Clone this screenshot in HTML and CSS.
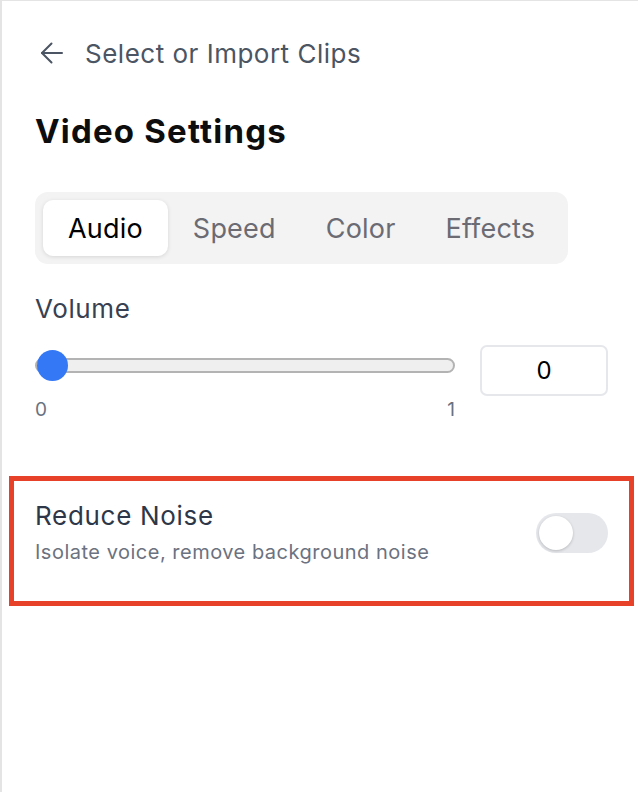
FILE: index.html
```html
<!DOCTYPE html>
<html lang="en">
<head>
    <meta charset="UTF-8">
    <meta name="viewport" content="width=device-width, initial-scale=1.0">
    <title>Video Settings</title>
    <link rel="stylesheet" href="styles.css">
</head>
<body>
    <div class="panel">
        <div class="back-row">
            <svg class="back-icon" viewBox="0 0 24 24" width="24" height="24" fill="none" stroke="currentColor" stroke-width="2" stroke-linecap="round" stroke-linejoin="round">
                <path d="M22 12H2"/>
                <path d="M11.5 2.5L2 12l9.5 9.5"/>
            </svg>
            <span>Select or Import Clips</span>
        </div>

        <h1 class="title">Video Settings</h1>

        <div class="tabs">
            <button class="tab active">Audio</button>
            <button class="tab">Speed</button>
            <button class="tab">Color</button>
            <button class="tab">Effects</button>
        </div>

        <div class="field">
            <div class="field-label">Volume</div>
            <div class="slider-row">
                <div class="slider-col">
                    <input class="slider" type="range" min="0" max="1" step="0.01" value="0">
                    <div class="slider-marks">
                        <span>0</span>
                        <span>1</span>
                    </div>
                </div>
                <input class="value-box" type="text" value="0">
            </div>
        </div>

        <div class="option highlight">
            <div class="option-text">
                <div class="option-title">Reduce Noise</div>
                <div class="option-desc">Isolate voice, remove background noise</div>
            </div>
            <div class="toggle"><div class="knob"></div></div>
        </div>
    </div>
</body>
</html>
```

FILE: styles.css
```css
html, body {
    margin: 0;
    background-color: #ffffff;
}
body {
    font-family: Inter, "Noto Sans", sans-serif;
}
.panel {
    min-height: 100vh;
    box-sizing: border-box;
    border-left: 2px solid #e4e4e4;
    border-top: 1px solid #e4e4e4;
    padding: 36px 30px 0 33px;
}
.back-row {
    display: flex;
    align-items: center;
    gap: 21px;
    height: 32px;
    color: #4b5563;
    font-size: 26px;
    letter-spacing: 0.5px;
    margin-left: 5px;
}
.back-icon {
    display: block;
}
.title {
    margin: 42px 0 0;
    font-size: 33px;
    line-height: 40px;
    font-weight: 700;
    letter-spacing: 1.2px;
    color: #0d0d0d;
}
.tabs {
    display: inline-flex;
    margin-top: 41px;
    padding: 8px;
    background-color: #f3f3f3;
    border-radius: 13px;
}
.tab {
    font-family: inherit;
    font-size: 27px;
    letter-spacing: 0.2px;
    height: 56px;
    padding: 0 25px;
    border: none;
    background: none;
    color: #6b6b73;
    border-radius: 10px;
    cursor: pointer;
}
.tab.active {
    background-color: #ffffff;
    color: #000000;
    box-shadow: 0 1px 4px rgba(0, 0, 0, 0.12);
}
.field {
    margin-top: 30px;
}
.field-label {
    font-size: 26px;
    line-height: 30px;
    letter-spacing: 0.6px;
    color: #374151;
}
.slider-row {
    display: flex;
    align-items: flex-start;
    gap: 25px;
    margin-top: 21px;
}
.slider-col {
    width: 420px;
    padding-top: 5px;
}
.slider {
    -webkit-appearance: none;
    appearance: none;
    display: block;
    width: 420px;
    height: 31px;
    margin: 0;
    background: transparent;
}
.slider::-webkit-slider-runnable-track {
    height: 15px;
    box-sizing: border-box;
    background-color: #efefef;
    border: 2px solid #b3b3b3;
    border-radius: 8px;
}
.slider::-webkit-slider-thumb {
    -webkit-appearance: none;
    width: 31px;
    height: 31px;
    margin-top: -10px;
    border-radius: 50%;
    background-color: #3478f6;
}
.slider-marks {
    display: flex;
    justify-content: space-between;
    margin-top: 17px;
    font-size: 19px;
    line-height: 24px;
    color: #6b7280;
}
.value-box {
    width: 128px;
    height: 51px;
    box-sizing: border-box;
    border: 2px solid #e5e7eb;
    border-radius: 7px;
    text-align: center;
    font-family: inherit;
    font-size: 24px;
    color: #000000;
    padding: 0;
}
.option {
    display: flex;
    align-items: center;
    justify-content: space-between;
    margin: 54px -26px 0;
    padding: 20px 21px 36px;
}
.highlight {
    border: 5px solid #e8412a;
}
.option-title {
    font-size: 26px;
    line-height: 30px;
    letter-spacing: 0.7px;
    color: #2d3748;
}
.option-desc {
    margin-top: 8px;
    font-size: 20px;
    line-height: 26px;
    letter-spacing: 0.5px;
    color: #6b7280;
}
.toggle {
    width: 72px;
    height: 40px;
    box-sizing: border-box;
    padding: 3px;
    background-color: #e5e7eb;
    border-radius: 20px;
}
.knob {
    width: 34px;
    height: 34px;
    border-radius: 50%;
    background-color: #ffffff;
    box-shadow: 0 1px 3px rgba(0, 0, 0, 0.2);
}
```
